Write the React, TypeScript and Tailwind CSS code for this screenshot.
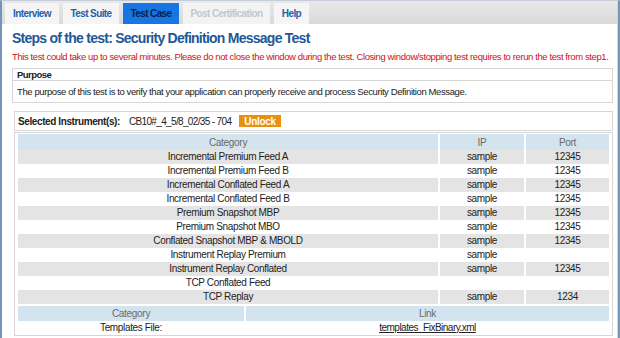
const tabs = [
  { label: "Interview", state: "normal", w: "w-[54px]" },
  { label: "Test Suite", state: "normal", w: "w-[56px]" },
  { label: "Test Case", state: "active", w: "w-[56px]" },
  { label: "Post Certification", state: "disabled", w: "w-[87px]" },
  { label: "Help", state: "normal", w: "w-[35px]" },
];

const feeds = [
  { category: "Incremental Premium Feed A", ip: "sample", port: "12345" },
  { category: "Incremental Premium Feed B", ip: "sample", port: "12345" },
  { category: "Incremental Conflated Feed A", ip: "sample", port: "12345" },
  { category: "Incremental Conflated Feed B", ip: "sample", port: "12345" },
  { category: "Premium Snapshot MBP", ip: "sample", port: "12345" },
  { category: "Premium Snapshot MBO", ip: "sample", port: "12345" },
  { category: "Conflated Snapshot MBP & MBOLD", ip: "sample", port: "12345" },
  { category: "Instrument Replay Premium", ip: "sample", port: "" },
  { category: "Instrument Replay Conflated", ip: "sample", port: "12345" },
  { category: "TCP Conflated Feed", ip: "", port: "" },
  { category: "TCP Replay", ip: "sample", port: "1234" },
];

const App = () => {
  return (
    <div className="h-[338px] w-[620px] overflow-hidden bg-white font-['Liberation_Sans',Arial,sans-serif] text-[10px] text-[#222]">
      <div className="flex h-full border-t border-l-2 border-r-2 border-t-[#c5ced8] border-l-[#7595b8] border-r-[#7595b8]">
        <div className="min-w-0 flex-1 overflow-hidden border-r border-[#d8d8d8]">
          {/* tabs */}
          <div className="flex h-[23px] items-end gap-[4px] bg-gradient-to-b from-[#e9e9e9] to-[#d9d9d9] pl-[3px] pt-[2px]">
            {tabs.map((tab) => (
              <div
                key={tab.label}
                className={`flex h-[21px] items-center justify-center text-[10px] font-bold tracking-[-0.6px] ${tab.w} ${
                  tab.state === "active"
                    ? "bg-[#1876e2] text-[#0b2145]"
                    : tab.state === "disabled"
                      ? "bg-[#f3f3f3] text-[#c2c7cc]"
                      : "bg-[#f5f5f5] text-[#2361ad]"
                }`}
              >
                {tab.label}
              </div>
            ))}
          </div>

          <div className="pl-[10px] pr-[4px]">
            <h1 className="mt-[5px] text-[14px] leading-[18px] font-bold tracking-[-0.75px] text-[#1e5896]">
              Steps of the test: Security Definition Message Test
            </h1>
            <p className="mt-[4px] text-[9.5px] leading-[12px] tracking-[-0.4px] whitespace-nowrap text-[#d0101a]">
              This test could take up to several minutes. Please do not close the window during the test. Closing
              window/stopping test requires to rerun the test from step1.
            </p>

            <div className="mt-[5px] border border-[#d6d6d6]">
              <div className="border-b border-[#d6d6d6] px-[4px] text-[9.5px] leading-[11px] font-bold tracking-[-0.55px]">
                Purpose
              </div>
              <div className="px-[4px] py-[5px] text-[9.5px] leading-[11px] tracking-[-0.4px]">
                The purpose of this test is to verify that your application can properly receive and process Security
                Definition Message.
              </div>
            </div>

            <div className="mt-[8px] ml-[2px] flex h-[20px] items-center border border-[#d6d6d6] pl-[3px]">
              <span className="font-bold tracking-[-0.4px]">Selected Instrument(s):</span>
              <span className="ml-[9px] tracking-[-0.65px]">CB10#_4_5/8_02/35 - 704</span>
              <span className="ml-[8px] flex h-[12px] items-center bg-[#e8900f] px-[5px] font-bold tracking-[-0.3px] text-white">
                Unlock
              </span>
            </div>

            <div className="mt-[1px] ml-[2px] border border-[#d6d6d6] px-[1px] pt-[1px] pb-[1px]">
              <table className="w-full border-separate border-spacing-x-[2px] border-spacing-y-0 text-center text-[10px] tracking-[-0.35px]">
                <thead>
                  <tr className="h-[16px] bg-[#d3e4ef] text-[#6a6a6a]">
                    <th className="font-normal tracking-[-0.3px]">Category</th>
                    <th className="w-[84px] font-normal tracking-[-0.3px]">IP</th>
                    <th className="w-[83px] font-normal tracking-[-0.3px]">Port</th>
                  </tr>
                </thead>
                <tbody>
                  {feeds.map((row, i) => (
                    <tr key={row.category} className={`h-[14px] leading-[12px] ${i % 2 === 0 ? "bg-[#e4e4e4]" : "bg-white"}`}>
                      <td>{row.category}</td>
                      <td>{row.ip}</td>
                      <td>{row.port}</td>
                    </tr>
                  ))}
                </tbody>
              </table>

              <table className="mt-[2px] w-full border-separate border-spacing-x-[2px] border-spacing-y-0 text-center text-[10px] tracking-[-0.35px]">
                <thead>
                  <tr className="h-[15px] bg-[#d3e4ef] text-[#6a6a6a]">
                    <th className="w-[226px] font-normal tracking-[-0.3px]">Category</th>
                    <th className="font-normal tracking-[-0.3px]">Link</th>
                  </tr>
                </thead>
                <tbody>
                  <tr className="h-[13px] leading-[12px]">
                    <td>Templates File:</td>
                    <td>
                      <a className="underline tracking-[-0.5px]">templates_FixBinary.xml</a>
                    </td>
                  </tr>
                </tbody>
              </table>
            </div>
          </div>
        </div>
      </div>
    </div>
  );
};

export default App;
